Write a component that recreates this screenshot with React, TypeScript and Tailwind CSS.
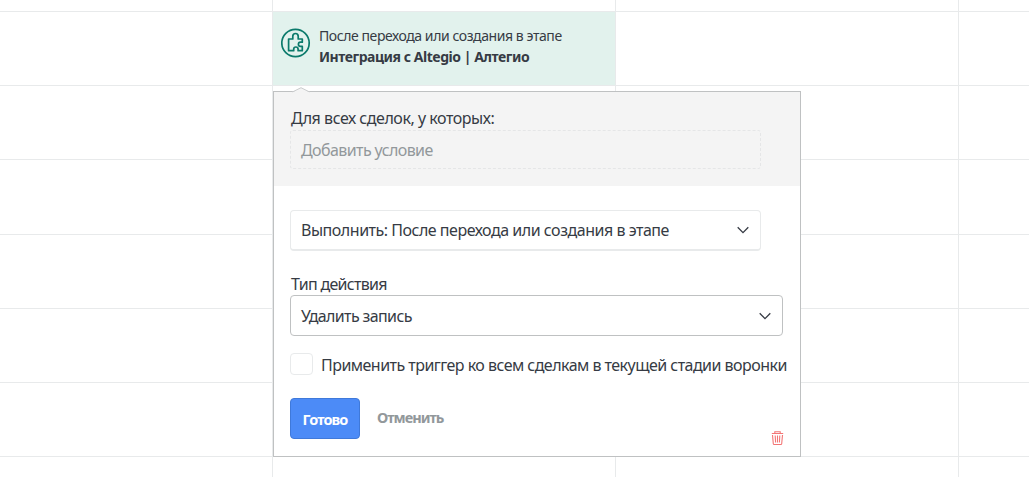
import type { ReactNode } from "react";

const rows = ["h-3", "h-[74px]", "h-[74px]", "h-[75px]", "h-[74px]", "h-[74px]", "h-[74px]", "h-[20px]"];

function PuzzleIcon() {
    return (
        <svg className="h-[30px] w-[30px] shrink-0" viewBox="0 0 30 30" fill="none" stroke="#0b7a6b">
            <circle cx="14.500" cy="15" r="13.700" strokeWidth="1.700" />
            <path
                d="M7.600 11h4.200V8.200a2.700 2.700 0 0 1 5.400 0V11h4.100v3.200h-1.800a2.100 2.100 0 0 0 0 4.200h1.800v4.300h-4.200v-1.500a2.200 2.200 0 0 0-4.400 0v1.500H7.600z"
                strokeWidth="1.700"
                strokeLinejoin="round"
            />
        </svg>
    );
}

function Chevron() {
    return (
        <svg className="h-2 w-3 shrink-0" viewBox="0 0 12 8" fill="none" stroke="#363b44" strokeWidth="1.3">
            <path d="M.7 1.200 6 6.600l5.300-5.400" />
        </svg>
    );
}

function TrashIcon() {
    return (
        <svg className="h-[14px] w-[13px]" viewBox="0 0 13 14" fill="none" stroke="#f37575" strokeWidth="1.1">
            <path d="M.8 2.500h11.400M3.800 2.500V.7h5.400v1.800M1.500 4l.8 8.700q.1.800.9.800h6.600q.8 0 .9-.8l.8-8.700M4.200 4.500l.4 7M6.500 4.500v7M8.800 4.500l-.4 7" />
        </svg>
    );
}

function Select({ children, className }: { children: ReactNode; className: string }) {
    return (
        <button className={`flex items-center justify-between rounded-[4px] bg-white pl-[10px] pr-[11px] text-left ${className}`}>
            {children}
            <Chevron />
        </button>
    );
}

function TriggerCard() {
    return (
        <div className="flex h-[73px] w-[342px] items-start bg-[#e2f2ed] pl-2 pt-4">
            <PuzzleIcon />
            <div className="-mt-[3px] pl-2 text-[14px] leading-[21px] whitespace-nowrap">
                <div className="tracking-[-0.42px]">После перехода или создания в этапе</div>
                <div className="font-bold tracking-[-0.47px]">Интеграция с Altegio | Алтегио</div>
            </div>
        </div>
    );
}

function TriggerPopup() {
    return (
        <div className="absolute left-[273px] top-[91px] h-[366px] w-[528px] border border-[#bfc1c2] bg-white text-[16px] leading-5 whitespace-nowrap">
            <svg className="absolute -top-[5px] left-[18px] h-[6px] w-[18px]" viewBox="0 0 18 6">
                <path d="M0 6 1.500 4.800 9 .7l7.500 4.100L18 6z" fill="#f4f4f4" />
                <path d="M0 4.700h1L9 .7l8 4h1" fill="none" stroke="#c9cbcc" />
            </svg>
            <div className="h-[94px] bg-[#f4f4f4] pl-4 pt-4">
                <div className="pl-px tracking-[-0.46px]">Для всех сделок, у которых:</div>
                <div className="mt-[2px] flex h-[39px] w-[471px] items-center rounded-[3px] border border-dashed border-[#e5e6e7] pl-[10px] tracking-[-0.59px] text-[#92989b]">
                    Добавить условие
                </div>
            </div>
            <div className="pl-4 pt-6">
                <Select className="h-[41px] w-[471px] border border-b-2 border-[#e8eaeb] tracking-[-0.47px]">
                    Выполнить: После перехода или создания в этапе
                </Select>
                <div className="mt-[23px] pl-px tracking-[-0.7px]">Тип действия</div>
                <Select className="mt-[1px] h-[41px] w-[493px] border border-[#bfc1c2] tracking-[-0.62px]">Удалить запись</Select>
                <label className="mt-[17px] flex h-[23px] items-start gap-2">
                    <span className="h-[22px] w-[23px] rounded-[4px] border border-[#e8eaeb]" />
                    <span className="mt-[2px] tracking-[-0.53px]">Применить триггер ко всем сделкам в текущей стадии воронки</span>
                </label>
                <div className="mt-[22px] flex h-[41px] items-center gap-[17px] text-[14.5px] font-bold">
                    <button className="h-[41px] w-[70px] rounded-[4px] border border-[#3f79da] bg-[#4c8bf7] tracking-[-0.9px] text-white">
                        Готово
                    </button>
                    <button className="-mt-[3px] tracking-[-1px] text-[#92989b]">Отменить</button>
                </div>
            </div>
            <button className="absolute bottom-[11px] right-[16px] h-[14px] w-[13px]">
                <TrashIcon />
            </button>
        </div>
    );
}

export default function App() {
    return (
        <div className="relative h-[477px] w-[1029px] overflow-hidden bg-white font-['Noto_Sans','Open_Sans',sans-serif] text-[#363b44]">
            {rows.map((height, i) => (
                <div key={i} className={`grid grid-cols-[273px_343px_343px_1fr] ${height}`}>
                    {[0, 1, 2, 3].map((col) => (
                        <div
                            key={col}
                            className={`${col < 3 ? "border-r" : ""} ${i < 7 ? "border-b" : ""} border-[#e8eaeb]`}
                        >
                            {i === 1 && col === 1 && <TriggerCard />}
                        </div>
                    ))}
                </div>
            ))}
            <TriggerPopup />
        </div>
    );
}
